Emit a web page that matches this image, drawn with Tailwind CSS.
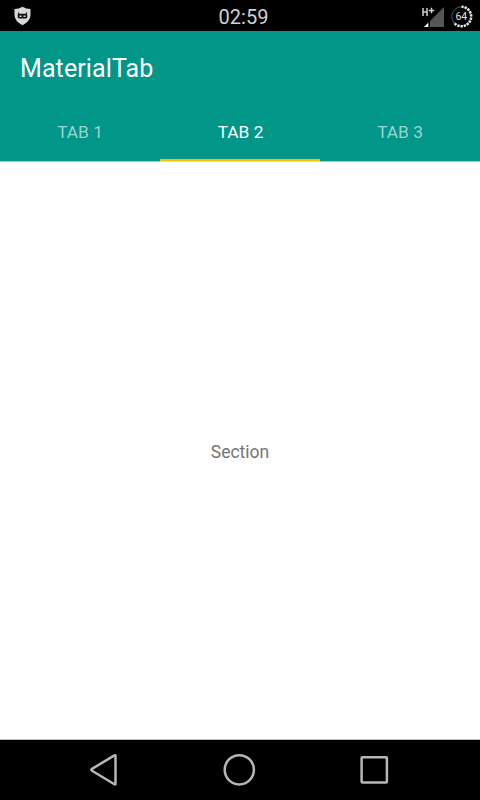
<!DOCTYPE html>
<html lang="en">
<head>
<meta charset="utf-8">
<title>MaterialTab</title>
<script src="https://cdn.jsdelivr.net/npm/@tailwindcss/browser@4"></script>
</head>
<body class="w-[480px] h-[800px] overflow-hidden flex flex-col bg-white font-['Roboto',sans-serif]">
  <div class="h-[31px] shrink-0 bg-black grid grid-cols-3 items-center">
    <svg class="ml-3.5 -mt-px" width="17" height="20" viewBox="0 0 17 20">
      <path d="M8.500 .8Q12 3 16.500 3V9.500Q16 15.500 8.500 19.200Q1 15.500 .5 9.500V3Q5 3 8.500 .8Z" fill="#d8d8d8"/>
      <path d="M4.300 5.500L5.400 7.800H11.600L12.700 5.500L12.900 7.900Q13.300 8.400 13.300 9.500V10.800Q13.300 12.400 11.800 12.400H5.200Q3.700 12.400 3.700 10.800V9.500Q3.700 8.400 4.100 7.900Z" fill="#111"/>
      <path d="M5.500 9.500H7.500V10.900H5.500ZM9.500 9.500H11.500V10.900H9.500Z" fill="#d8d8d8"/>
    </svg>
    <div class="text-center text-[20px] leading-[31px] text-[#d0d0d0] pl-[7px] pt-[2px]">02:59</div>
    <svg class="justify-self-end" width="64" height="31" viewBox="0 0 64 31">
      <path d="M7 7V15M11 7V15M7 11H11" fill="none" stroke="#d0d0d0" stroke-width="1.500"/>
      <path d="M12.800 9.500H18.200M15.500 6.800V12.200" stroke="#d0d0d0" stroke-width="1.500"/>
      <path d="M28 6V26H8Z" fill="#555"/>
      <path d="M12.500 21.500V26H8Z" fill="#fff"/>
      <path d="M12.500 21V26H14V19.500Z" fill="#000"/>
      <circle cx="45.500" cy="15.500" r="9.700" fill="none" stroke="#555" stroke-width="1"/>
      <path d="M45.500 5.800A9.700 9.700 0 1 1 38 21.700" fill="none" stroke="#e4e4e4" stroke-width="2.600" stroke-dasharray="2.200 1"/>
      <text x="45.300" y="19" text-anchor="middle" font-size="10.500" fill="#e0e0e0" font-family="Roboto">64</text>
    </svg>
  </div>
  <header class="h-[131px] shrink-0 bg-[#009688] flex flex-col border-b border-[#8fd0ca]">
    <h1 class="h-[74px] pl-5 text-[25px] leading-[75px] text-white tracking-[0.1px]">MaterialTab</h1>
    <nav class="flex-1 grid grid-cols-3 text-center text-[17.300px] leading-[54px] text-[#99d5cf]">
      <div>TAB 1</div>
      <div class="relative text-white pl-px">TAB 2
        <span class="absolute left-0 right-0 -bottom-px h-[3px] bg-[#fbc204] border-b border-[#ffe58d]"></span>
      </div>
      <div>TAB 3</div>
    </nav>
  </header>
  <main class="flex-1 flex items-center justify-center pt-1 text-[17.500px] text-[#757575] border-b border-[#bdbdbd]">Section</main>
  <footer class="h-[60px] shrink-0 bg-black flex items-center justify-between pl-[88px] pr-[90px]">
    <svg width="32" height="34" viewBox="0 0 32 34"><path d="M27.500 3Q27.500 1.700 26.400 2.400L4 15.900Q2.600 16.800 4 17.700L26.400 31.200Q27.500 31.800 27.500 30.500Z" fill="none" stroke="#b6b6b6" stroke-width="2.500"/></svg>
    <svg width="34" height="34" viewBox="0 0 34 34"><circle cx="17.300" cy="16.800" r="14.600" fill="none" stroke="#b6b6b6" stroke-width="2.500"/></svg>
    <svg width="32" height="32" viewBox="0 0 32 32"><rect x="3.600" y="3.200" width="25.300" height="25.300" rx=".8" fill="none" stroke="#b6b6b6" stroke-width="2.500"/></svg>
  </footer>
</body>
</html>
